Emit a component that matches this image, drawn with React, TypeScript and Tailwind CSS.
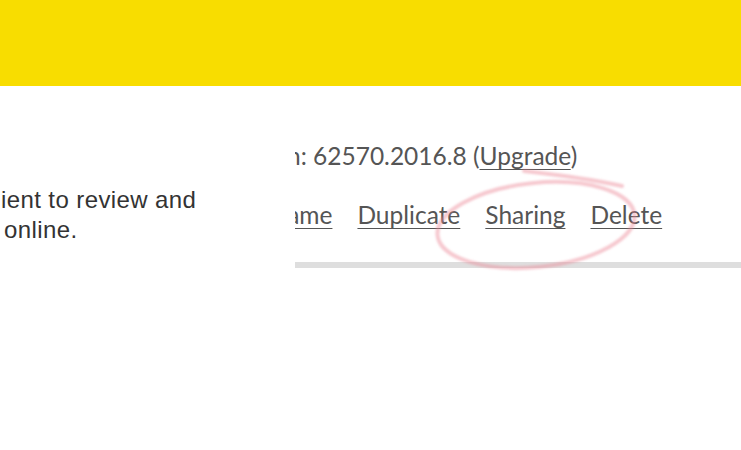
import React from "react";

export default function App() {
  const lato = { fontFamily: "Lato, 'Open Sans', sans-serif" };
  return (
    <div className="relative w-[741px] h-[450px] overflow-hidden bg-white">
      <div className="h-[86px] bg-[#f8dd00]" />
      <div className="flex">
        <div
          className="w-[295px] shrink-0 overflow-hidden pt-[99px] text-[24px] leading-[30px] text-[#333] tracking-[0.4px] whitespace-nowrap"
          style={{ fontFamily: "'Liberation Sans', Arial, sans-serif" }}
        >
          <div className="ml-[1px]">ient to review and</div>
          <div className="ml-[4px]">online.</div>
        </div>
        <div className="flex-1 min-w-0 overflow-hidden pt-[55px]" style={lato}>
          <div className="ml-[-8px] whitespace-nowrap text-[24.5px] leading-[30px] text-[#555]">
            n: 62570.2016.8 (
            <span className="underline decoration-1 underline-offset-[4px]">Upgrade</span>)
          </div>
          <div className="mt-[29px] overflow-hidden">
            <div className="ml-[-49px] flex gap-[25px] whitespace-nowrap text-[24.5px] leading-[30px] text-[#555]">
              {["Rename", "Duplicate", "Sharing", "Delete"].map((t) => (
                <span key={t} className="underline decoration-1 underline-offset-[4px]">
                  {t}
                </span>
              ))}
            </div>
          </div>
          <div className="mt-[32px] h-[6px] bg-[#dedede]" />
        </div>
      </div>
      <svg
        className="pointer-events-none absolute inset-0"
        width="741"
        height="450"
        viewBox="0 0 741 450"
      >
        <defs>
          <filter id="soft" x="-10%" y="-10%" width="120%" height="120%">
            <feGaussianBlur stdDeviation="0.8" />
          </filter>
        </defs>
        <g
          fill="none"
          stroke="rgba(236,135,150,0.45)"
          strokeWidth="4"
          strokeLinecap="round"
          filter="url(#soft)"
        >
          <ellipse cx="536" cy="225" rx="99" ry="42" transform="rotate(-6 536 225)" />
          <path d="M 524 171 C 560 175, 595 180, 622 186" />
        </g>
      </svg>
    </div>
  );
}
